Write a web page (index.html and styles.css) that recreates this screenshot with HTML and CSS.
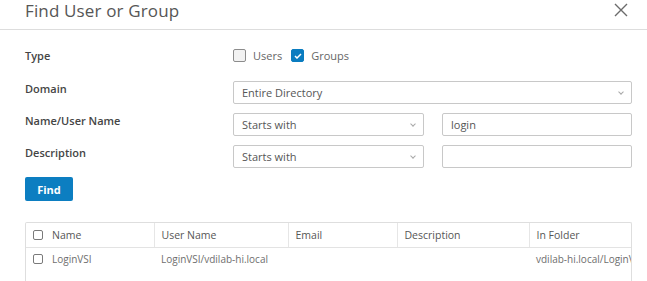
FILE: index.html
```html
<!DOCTYPE html>
<html lang="en">
<head>
    <meta charset="UTF-8">
    <title>Find User or Group</title>
    <link rel="stylesheet" href="styles.css">
</head>
<body>
    <div class="dialog">
        <div class="dialog-header">
            <h1 class="dialog-title">Find User or Group</h1>
            <button class="close-btn" aria-label="Close">
                <svg width="14" height="14" viewBox="0 0 14 14"><path d="M1 1 L13 13 M13 1 L1 13" stroke="#6b6b6b" stroke-width="1.4" fill="none"/></svg>
            </button>
        </div>

        <div class="dialog-body">
            <div class="form-row row-type">
                <div class="form-label">Type</div>
                <div class="form-control checks">
                    <label class="check"><span class="box"></span>Users</label>
                    <label class="check"><span class="box checked"><svg width="8" height="6" viewBox="0 0 8 6"><path d="M1 3 L3 5 L7 1" stroke="#fff" stroke-width="1.5" fill="none"/></svg></span>Groups</label>
                </div>
            </div>

            <div class="form-row">
                <div class="form-label">Domain</div>
                <div class="form-control">
                    <div class="select">Entire Directory<span class="chevron"></span></div>
                </div>
            </div>

            <div class="form-row">
                <div class="form-label">Name/User Name</div>
                <div class="form-control split">
                    <div class="select">Starts with<span class="chevron"></span></div>
                    <div class="input">login</div>
                </div>
            </div>

            <div class="form-row">
                <div class="form-label">Description</div>
                <div class="form-control split">
                    <div class="select">Starts with<span class="chevron"></span></div>
                    <div class="input"></div>
                </div>
            </div>

            <button class="btn-find">Find</button>

            <div class="grid">
                <table class="grid-table">
                    <colgroup>
                        <col style="width:128px">
                        <col style="width:134px">
                        <col style="width:109px">
                        <col style="width:132px">
                        <col style="width:180px">
                    </colgroup>
                    <thead>
                        <tr>
                            <th><span class="row-check"></span>Name</th>
                            <th>User Name</th>
                            <th>Email</th>
                            <th>Description</th>
                            <th>In Folder</th>
                        </tr>
                    </thead>
                    <tbody>
                        <tr>
                            <td><span class="row-check"></span>LoginVSI</td>
                            <td>LoginVSI/vdilab-hi.local</td>
                            <td></td>
                            <td></td>
                            <td>vdilab-hi.local/LoginVSI</td>
                        </tr>
                    </tbody>
                </table>
            </div>
        </div>
    </div>
</body>
</html>
```

FILE: styles.css
```css
/* Base */
body {
    margin: 0;
    font-family: "Open Sans", "Liberation Sans", sans-serif;
    background: #ffffff;
    color: #565656;
}

.dialog {
    width: 647px;
    height: 281px;
    overflow: hidden;
}

/* Header */
.dialog-header {
    height: 29px;
    border-bottom: 1px solid #dddddd;
    display: flex;
    align-items: flex-start;
    justify-content: space-between;
    padding: 0 19px 0 25px;
}

.dialog-title {
    margin: 0;
    font-size: 17px;
    font-weight: 400;
    line-height: 21px;
    color: #565656;
    letter-spacing: 0.15px;
}

.close-btn {
    border: none;
    background: none;
    padding: 0;
    margin-top: 3px;
    width: 14px;
    height: 14px;
    cursor: pointer;
}

/* Form */
.dialog-body {
    padding: 0 15px 0 25px;
}

.form-row {
    display: flex;
    align-items: flex-start;
    margin-top: 9px;
}

.row-type {
    margin-top: 14px;
    margin-bottom: 14px;
    height: 23px;
    align-items: center;
}

.form-label {
    width: 208px;
    font-size: 11px;
    line-height: 15px;
    font-weight: 600;
    color: #454545;
}

.row-type .form-label {
    margin-top: -1px;
}

.form-control {
    width: 399px;
}

.form-control.split {
    display: grid;
    grid-template-columns: 191px 190px;
    column-gap: 18px;
}

.checks {
    display: flex;
    gap: 9px;
    font-size: 11px;
    color: #666;
}

.check {
    display: flex;
    align-items: center;
    gap: 7px;
}

.box {
    width: 11px;
    height: 11px;
    border: 1px solid #8c8c8c;
    border-radius: 2px;
    background: #f2f2f2;
    display: flex;
    align-items: center;
    justify-content: center;
}

.box.checked {
    background: #0a7cc0;
    border-color: #0a7cc0;
}

.select,
.input {
    box-sizing: border-box;
    height: 23px;
    border: 1px solid #c8c8c8;
    border-radius: 2px;
    padding: 0 8px;
    font-size: 11px;
    line-height: 21px;
    color: #565656;
    position: relative;
}

.chevron {
    position: absolute;
    right: 8px;
    top: 8px;
    width: 3px;
    height: 3px;
    border-right: 1px solid #a8a8a8;
    border-bottom: 1px solid #a8a8a8;
    transform: rotate(45deg);
}

.btn-find {
    margin-top: 9px;
    width: 48px;
    height: 24px;
    border: none;
    border-radius: 2px;
    background: #0c7ec1;
    color: #ffffff;
    font-family: inherit;
    font-size: 11px;
    font-weight: 700;
    padding: 0;
    display: block;
}

/* Results grid */
.grid {
    margin-top: 21px;
    width: 607px;
    height: 59px;
    box-sizing: border-box;
    border: 1px solid #dedede;
    border-bottom: none;
    border-radius: 2px 2px 0 0;
    overflow: hidden;
}

.grid-table {
    border-collapse: collapse;
    table-layout: fixed;
    width: 683px;
    font-size: 10.5px;
}

.grid-table th {
    height: 24px;
    text-align: left;
    font-weight: 400;
    color: #565656;
    padding: 0 7px;
    border-bottom: 1px solid #e3e3e3;
    border-left: 1px solid #e6e6e6;
    white-space: nowrap;
}

.grid-table th:first-child,
.grid-table td:first-child {
    border-left: none;
    padding-left: 7px;
}

.grid-table td {
    height: 22px;
    padding: 0 7px;
    color: #6e6e6e;
    font-size: 10px;
    white-space: nowrap;
    overflow: hidden;
}

.row-check {
    display: inline-block;
    width: 8px;
    height: 8px;
    border: 1px solid #7a7a7a;
    border-radius: 2px;
    margin-right: 9px;
    vertical-align: -1px;
}
```
